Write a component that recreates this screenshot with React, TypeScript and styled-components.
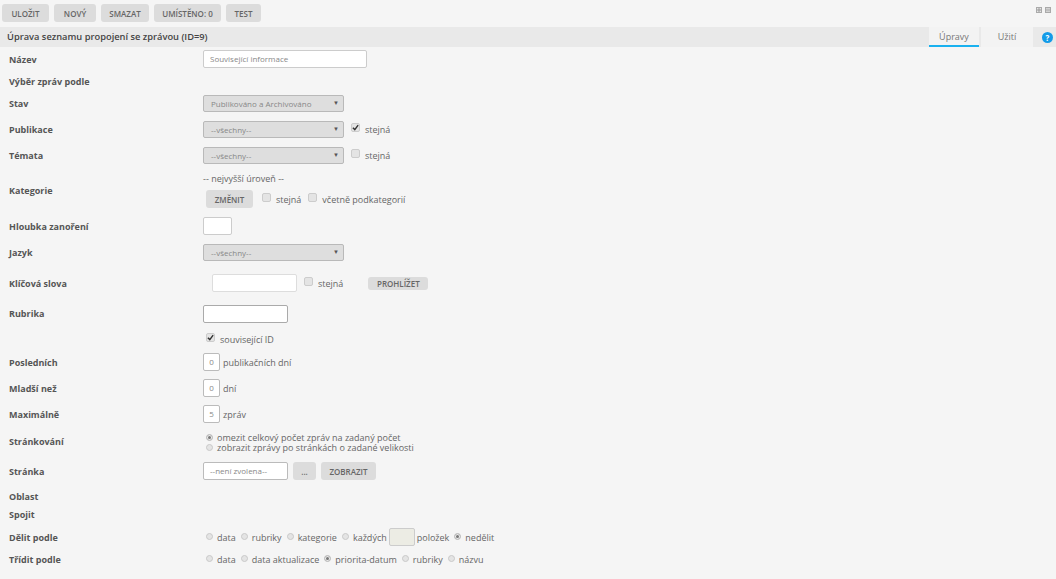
import React from "react";
import styled, { createGlobalStyle } from "styled-components";

const GlobalStyle = createGlobalStyle`
  html, body {
    margin: 0;
    padding: 0;
    background: #f5f5f5;
    font-family: "Open Sans", "Liberation Sans", sans-serif;
    overflow: hidden;
  }
`;

const styles = {
  Page: styled.div`
    width: 1056px;
    height: 579px;
    display: flex;
    flex-direction: column;
    background: #f5f5f5;
    color: #555;
    font-size: 9px;
  `,
  Toolbar: styled.div`
    height: 27px;
    box-sizing: border-box;
    padding: 4px 2px 0;
    display: flex;
    align-items: flex-start;
    gap: 5px;
  `,
  Corner: styled.div`
    margin-left: auto;
    margin-top: 3px;
    margin-right: 3px;
    display: flex;
    gap: 3px;
  `,
  HeaderBar: styled.div`
    height: 20px;
    display: flex;
    align-items: stretch;
    background: #e9e9e9;
    padding-left: 7px;
  `,
  Title: styled.div`
    flex: 1;
    font-size: 9.3px;
    font-weight: 600;
    line-height: 20px;
    color: #444;
  `,
  Tab: styled.div<{ $active?: boolean }>`
    width: ${p => (p.$active ? "50px" : "52px")};
    margin-right: ${p => (p.$active ? "2px" : "0")};
    box-sizing: border-box;
    text-align: center;
    font-size: 9px;
    line-height: 20px;
    color: #777;
    background: #f3f3f3;
    border-bottom: 2px solid ${p => (p.$active ? "#1ab1ef" : "transparent")};
  `,
  HelpSlot: styled.div`
    width: 23px;
    padding-right: 3px;
    box-sizing: border-box;
    display: flex;
    align-items: center;
    justify-content: flex-end;
  `,
  Help: styled.div`
    width: 11px;
    height: 11px;
    border-radius: 50%;
    background: #139be8;
    color: #fff;
    font-size: 8px;
    font-weight: 700;
    line-height: 11px;
    text-align: center;
  `,
  Form: styled.div`
    padding-top: 1px;
    display: flex;
    flex-direction: column;
  `,
  Row: styled.div<{ $h: number }>`
    height: ${p => p.$h}px;
    display: flex;
    align-items: center;
  `,
  Label: styled.div`
    width: 194px;
    margin-left: 9px;
    flex: none;
    font-size: 9px;
    font-weight: 700;
    color: #555;
  `,
  Controls: styled.div<{ $gap?: number; $indent?: number; $top?: number }>`
    display: flex;
    align-items: center;
    gap: ${p => p.$gap ?? 0}px;
    padding-left: ${p => p.$indent ?? 0}px;
    padding-top: ${p => p.$top ?? 0}px;
  `,
  Stack: styled.div`
    display: flex;
    flex-direction: column;
    gap: 5px;
  `,
  Button: styled.div<{ $w: number; $h?: number }>`
    width: ${p => p.$w}px;
    height: ${p => p.$h ?? 18}px;
    flex: none;
    display: flex;
    align-items: center;
    justify-content: center;
    border-radius: 3px;
    background: #dcdcdc;
    color: #666;
    font-size: 8px;
    font-weight: 600;
    white-space: nowrap;
  `,
  TextBox: styled.div<{ $w: number; $h?: number; $fill?: string; $center?: boolean; $border?: string }>`
    width: ${p => p.$w}px;
    height: ${p => p.$h ?? 18}px;
    flex: none;
    box-sizing: border-box;
    padding: 0 ${p => (p.$center ? 0 : 6)}px;
    border: 1px solid ${p => p.$border ?? "#ccc"};
    border-radius: 2px;
    background: ${p => p.$fill ?? "#fff"};
    color: #888;
    font-size: 8px;
    line-height: 16px;
    text-align: ${p => (p.$center ? "center" : "left")};
  `,
  Select: styled.div`
    width: 141px;
    height: 17px;
    flex: none;
    box-sizing: border-box;
    padding: 0 7px;
    display: flex;
    align-items: center;
    justify-content: space-between;
    border: 1px solid #b9b9b9;
    border-radius: 2px;
    background: #dedede;
    color: #888;
    font-size: 8px;
  `,
  Arrow: styled.span`
    font-size: 6px;
    color: #555;
    margin-right: -3px;
  `,
  Check: styled.span`
    width: 9px;
    height: 9px;
    box-sizing: border-box;
    flex: none;
    border: 1px solid #ccc;
    border-radius: 2px;
    background: #e4e4e4;
    display: inline-flex;
    align-items: center;
    justify-content: center;
    margin-top: -3px;
  `,
  Radio: styled.span<{ $on?: boolean }>`
    width: 7px;
    height: 7px;
    flex: none;
    box-sizing: border-box;
    margin-top: -1px;
    border: 1px solid #c9c9c9;
    border-radius: 50%;
    background: ${p => (p.$on ? "#777" : "#e4e4e4")};
    box-shadow: ${p => (p.$on ? "inset 0 0 0 1px #eee" : "none")};
  `,
  Text: styled.span`
    font-size: 9px;
    color: #666;
    white-space: nowrap;
  `,
  Option: styled.div<{ $gap?: number }>`
    display: flex;
    align-items: center;
    gap: ${p => p.$gap ?? 4}px;
  `,
  Tight: styled.div`
    display: flex;
    flex-direction: column;
    line-height: 10px;
    padding-top: 4px;
  `,
  Mini: styled.svg`
    display: block;
  `,
};

const Tick = () => (
  <svg width="7" height="7" viewBox="0 0 8 8">
    <path d="M1 4.2 L3.2 6.4 L7 1.2" fill="none" stroke="#333" strokeWidth="1.6" />
  </svg>
);

const CornerIcon = ({ second }: { second?: boolean }) => (
  <styles.Mini width="6" height="6" viewBox="0 0 6 6">
    <rect x="0.5" y="0.5" width="5" height="5" fill="#e6e6e6" stroke="#aaa" />
    <path d={second ? "M2 1.5v3M4 1.5v3" : "M1 3h4M3 1v4"} stroke="#999" fill="none" />
  </styles.Mini>
);

const CheckOption = ({ on, children }: { on?: boolean; children: React.ReactNode }) => (
  <styles.Option $gap={5}>
    <styles.Check>{on && <Tick />}</styles.Check>
    <styles.Text>{children}</styles.Text>
  </styles.Option>
);

const RadioOption = ({ on, children }: { on?: boolean; children: React.ReactNode }) => (
  <styles.Option>
    <styles.Radio $on={on} />
    <styles.Text>{children}</styles.Text>
  </styles.Option>
);

const toolbar: [string, number][] = [
  ["ULOŽIT", 47],
  ["NOVÝ", 42],
  ["SMAZAT", 48],
  ["UMÍSTĚNO: 0", 67],
  ["TEST", 35],
];

export default function App() {
  return (
    <styles.Page>
      <GlobalStyle />
      <styles.Toolbar>
        {toolbar.map(([text, w]) => (
          <styles.Button key={text} $w={w}>
            {text}
          </styles.Button>
        ))}
        <styles.Corner>
          <CornerIcon />
          <CornerIcon second />
        </styles.Corner>
      </styles.Toolbar>

      <styles.HeaderBar>
        <styles.Title>Úprava seznamu propojení se zprávou (ID=9)</styles.Title>
        <styles.Tab $active>Úpravy</styles.Tab>
        <styles.Tab>Užití</styles.Tab>
        <styles.HelpSlot>
          <styles.Help>?</styles.Help>
        </styles.HelpSlot>
      </styles.HeaderBar>

      <styles.Form>
        <styles.Row $h={22}>
          <styles.Label>Název</styles.Label>
          <styles.TextBox $w={164}>Související informace</styles.TextBox>
        </styles.Row>
        <styles.Row $h={22}>
          <styles.Label>Výběr zpráv podle</styles.Label>
        </styles.Row>
        <styles.Row $h={22}>
          <styles.Label>Stav</styles.Label>
          <styles.Select>
            Publikováno a Archivováno<styles.Arrow>▼</styles.Arrow>
          </styles.Select>
        </styles.Row>
        <styles.Row $h={30}>
          <styles.Label>Publikace</styles.Label>
          <styles.Controls $gap={7}>
            <styles.Select>
              --všechny--<styles.Arrow>▼</styles.Arrow>
            </styles.Select>
            <CheckOption on>stejná</CheckOption>
          </styles.Controls>
        </styles.Row>
        <styles.Row $h={22}>
          <styles.Label>Témata</styles.Label>
          <styles.Controls $gap={7}>
            <styles.Select>
              --všechny--<styles.Arrow>▼</styles.Arrow>
            </styles.Select>
            <CheckOption>stejná</CheckOption>
          </styles.Controls>
        </styles.Row>
        <styles.Row $h={48}>
          <styles.Label>Kategorie</styles.Label>
          <styles.Stack>
            <styles.Text>-- nejvyšší úroveň --</styles.Text>
            <styles.Controls $indent={3}>
              <styles.Button $w={47} $h={18}>ZMĚNIT</styles.Button>
              <styles.Controls $gap={7} $indent={9}>
                <CheckOption>stejná</CheckOption>
                <CheckOption>včetně podkategorií</CheckOption>
              </styles.Controls>
            </styles.Controls>
          </styles.Stack>
        </styles.Row>
        <styles.Row $h={24}>
          <styles.Label>Hloubka zanoření</styles.Label>
          <styles.TextBox $w={29} />
        </styles.Row>
        <styles.Row $h={28}>
          <styles.Label>Jazyk</styles.Label>
          <styles.Select>
            --všechny--<styles.Arrow>▼</styles.Arrow>
          </styles.Select>
        </styles.Row>
        <styles.Row $h={34}>
          <styles.Label>Klíčová slova</styles.Label>
          <styles.Controls $indent={9}>
            <styles.TextBox $w={85} $border="#ddd" />
            <styles.Controls $gap={25} $indent={7}>
              <CheckOption>stejná</CheckOption>
              <styles.Button $w={60} $h={13}>PROHLÍŽET</styles.Button>
            </styles.Controls>
          </styles.Controls>
        </styles.Row>
        <styles.Row $h={26}>
          <styles.Label>Rubrika</styles.Label>
          <styles.Controls $top={2}>
            <styles.TextBox $w={85} $border="#aaa" />
          </styles.Controls>
        </styles.Row>
        <styles.Row $h={26}>
          <styles.Label />
          <styles.Controls $indent={3}>
            <CheckOption on>související ID</CheckOption>
          </styles.Controls>
        </styles.Row>
        <styles.Row $h={20}>
          <styles.Label>Posledních</styles.Label>
          <styles.Controls $gap={3}>
            <styles.TextBox $w={17} $center $border="#bbb">0</styles.TextBox>
            <styles.Text>publikačních dní</styles.Text>
          </styles.Controls>
        </styles.Row>
        <styles.Row $h={32}>
          <styles.Label>Mladší než</styles.Label>
          <styles.Controls $gap={3}>
            <styles.TextBox $w={17} $center $border="#bbb">0</styles.TextBox>
            <styles.Text>dní</styles.Text>
          </styles.Controls>
        </styles.Row>
        <styles.Row $h={20}>
          <styles.Label>Maximálně</styles.Label>
          <styles.Controls $gap={3}>
            <styles.TextBox $w={17} $center $border="#bbb">5</styles.TextBox>
            <styles.Text>zpráv</styles.Text>
          </styles.Controls>
        </styles.Row>
        <styles.Row $h={34}>
          <styles.Label>Stránkování</styles.Label>
          <styles.Tight>
            <styles.Controls $indent={3}>
              <RadioOption on>omezit celkový počet zpráv na zadaný počet</RadioOption>
            </styles.Controls>
            <styles.Controls $indent={3}>
              <RadioOption>zobrazit zprávy po stránkách o zadané velikosti</RadioOption>
            </styles.Controls>
          </styles.Tight>
        </styles.Row>
        <styles.Row $h={26}>
          <styles.Label>Stránka</styles.Label>
          <styles.Controls $gap={5}>
            <styles.TextBox $w={85} $border="#bbb">--není zvolena--</styles.TextBox>
            <styles.Button $w={23}>...</styles.Button>
            <styles.Button $w={55}>ZOBRAZIT</styles.Button>
          </styles.Controls>
        </styles.Row>
        <styles.Row $h={24}>
          <styles.Label>Oblast</styles.Label>
        </styles.Row>
        <styles.Row $h={12}>
          <styles.Label>Spojit</styles.Label>
        </styles.Row>
        <styles.Row $h={34}>
          <styles.Label>Dělit podle</styles.Label>
          <styles.Controls $gap={5} $indent={3}>
            <RadioOption>data</RadioOption>
            <RadioOption>rubriky</RadioOption>
            <RadioOption>kategorie</RadioOption>
            <styles.Controls $gap={2}>
              <RadioOption>každých</RadioOption>
              <styles.TextBox $w={26} $fill="#ececE4" />
              <styles.Text>položek</styles.Text>
            </styles.Controls>
            <RadioOption on>nedělit</RadioOption>
          </styles.Controls>
        </styles.Row>
        <styles.Row $h={10}>
          <styles.Label>Třídit podle</styles.Label>
          <styles.Controls $gap={5} $indent={3}>
            <RadioOption>data</RadioOption>
            <RadioOption>data aktualizace</RadioOption>
            <RadioOption on>priorita-datum</RadioOption>
            <RadioOption>rubriky</RadioOption>
            <RadioOption>názvu</RadioOption>
          </styles.Controls>
        </styles.Row>
      </styles.Form>
    </styles.Page>
  );
}
